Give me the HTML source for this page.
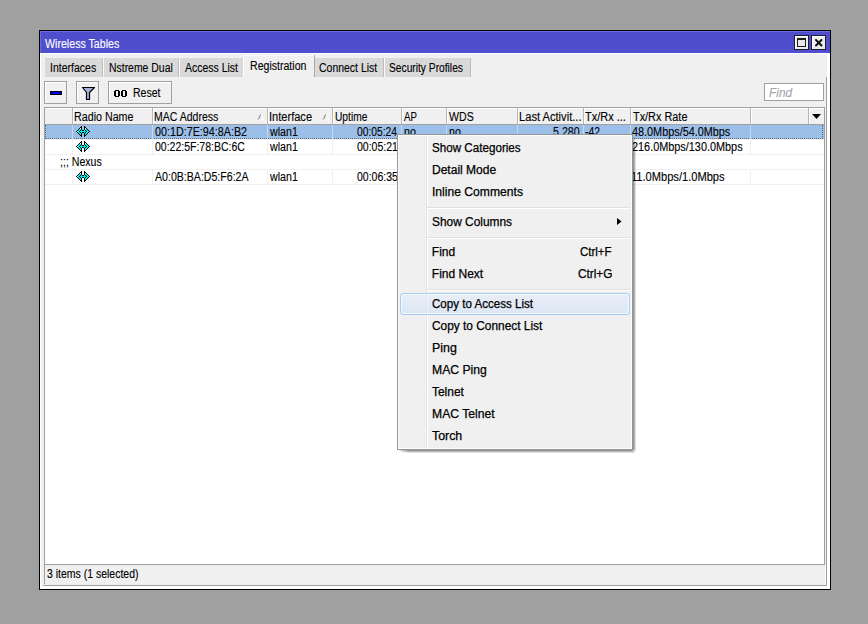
<!DOCTYPE html>
<html><head><meta charset="utf-8">
<style>
*{box-sizing:border-box;margin:0;padding:0}
html,body{width:868px;height:624px;overflow:hidden;background:#a0a0a0;font-family:"Liberation Sans",sans-serif;font-size:12px;color:#000}
.a{position:absolute}
.s{position:absolute;white-space:pre;font:12px/14px "Liberation Sans",sans-serif;transform-origin:0 0}
.hl{position:absolute;height:1px}
.s{-webkit-text-stroke:0.12px currentColor}
.s.m{-webkit-text-stroke:0.25px #000}
.vl{position:absolute;width:1px}
</style></head><body>
<!-- window frame -->
<div class="a" style="left:39px;top:30px;width:792px;height:560px;background:#000"></div>
<div class="a" style="left:40px;top:31px;width:790px;height:558px;background:#fff"></div>
<div class="a" style="left:41px;top:54px;width:786px;height:532px;background:#f0f0f0"></div>
<!-- title bar -->
<div class="a" style="left:40px;top:31px;width:790px;height:22px;background:#4f4fcd"></div>
<div class="hl" style="left:40px;top:31px;width:790px;background:#6b6be0"></div>
<div class="vl" style="left:40px;top:31px;height:22px;background:#6b6be0"></div>
<!-- title buttons -->
<div class="a" style="left:794px;top:35px;width:15px;height:15px;background:#1a1a30"></div>
<div class="a" style="left:795px;top:36px;width:13px;height:13px;background:#fff"></div>
<div class="a" style="left:796px;top:37px;width:12px;height:12px;background:#ececec"></div>
<div class="a" style="left:797px;top:38px;width:9px;height:9px;border:1px solid #202020;border-top-width:2px;background:#e8e8e8"></div>
<div class="a" style="left:811px;top:35px;width:15px;height:15px;background:#1a1a30"></div>
<div class="a" style="left:812px;top:36px;width:13px;height:13px;background:#fff"></div>
<div class="a" style="left:813px;top:37px;width:12px;height:12px;background:#ececec"></div>
<svg class="a" style="left:811px;top:35px" width="15" height="15" viewBox="0 0 15 15"><path d="M5 5L10.5 10.5M10.5 5L5 10.5" stroke="#111" stroke-width="2" stroke-linecap="round"/></svg>

<!-- tab strip -->
<div class="hl" style="left:40px;top:53px;width:790px;background:#fff"></div>
<div class="a" style="left:45px;top:58px;width:57px;height:19px;background:#d9d9d9"></div>
<div class="vl" style="left:102px;top:58px;height:19px;background:#bcbcbc"></div>
<div class="vl" style="left:103px;top:58px;height:19px;background:#fafafa"></div>
<div class="a" style="left:104px;top:58px;width:74px;height:19px;background:#d9d9d9"></div>
<div class="vl" style="left:178px;top:58px;height:19px;background:#bcbcbc"></div>
<div class="vl" style="left:179px;top:58px;height:19px;background:#fafafa"></div>
<div class="a" style="left:180px;top:58px;width:63px;height:19px;background:#d9d9d9"></div>
<div class="vl" style="left:243px;top:56px;height:22px;background:#fff"></div>
<div class="hl" style="left:243px;top:55px;width:71px;background:#fafafa"></div>
<div class="vl" style="left:314px;top:55px;height:22px;background:#a8a8a8"></div>
<div class="a" style="left:315px;top:58px;width:68px;height:19px;background:#d9d9d9"></div>
<div class="vl" style="left:383px;top:58px;height:19px;background:#bcbcbc"></div>
<div class="vl" style="left:384px;top:58px;height:19px;background:#fafafa"></div>
<div class="a" style="left:385px;top:58px;width:85px;height:19px;background:#d9d9d9"></div>
<div class="vl" style="left:470px;top:58px;height:19px;background:#bcbcbc"></div>

<!-- panel border right -->
<div class="vl" style="left:826px;top:77px;height:509px;background:#a0a0a0"></div>
<div class="hl" style="left:43px;top:585px;width:784px;background:#a0a0a0"></div>

<!-- toolbar buttons -->
<div class="a" style="left:44px;top:81px;width:23px;height:23px;border:1px solid #a0a0a0;background:#f0f0f0;box-shadow:inset 1px 1px 0 #fff"></div>
<div class="a" style="left:50px;top:91px;width:12px;height:4px;background:#000"></div>
<div class="a" style="left:51px;top:92px;width:10px;height:2px;background:#0000f0"></div>
<div class="a" style="left:76px;top:81px;width:23px;height:23px;border:1px solid #a0a0a0;background:#f0f0f0;box-shadow:inset 1px 1px 0 #fff"></div>
<svg class="a" style="left:76px;top:81px" width="23" height="23" viewBox="0 0 23 23"><path d="M6.5 6.5H18.5L13.5 11.5V18.5H10.5V11.5Z" fill="#a4b2dc" stroke="#000" stroke-width="1.2" stroke-linejoin="round"/></svg>
<div class="a" style="left:108px;top:81px;width:64px;height:23px;border:1px solid #a0a0a0;background:#f0f0f0;box-shadow:inset 1px 1px 0 #fff"></div>
<svg class="a" style="left:114px;top:90px" width="13" height="7" viewBox="0 0 13 7" shape-rendering="crispEdges"><path d="M1 0H5V1H6V6H5V7H1V6H0V1H1Z M2 1V6H4V1Z M8 0H12V1H13V6H12V7H8V6H7V1H8Z M9 1V6H11V1Z" fill="#000" fill-rule="evenodd"/></svg>
<div class="a" style="left:764px;top:83px;width:60px;height:18px;border:1px solid #a0a0a0;background:#fff"></div>

<!-- table -->
<div class="a" style="left:44px;top:107px;width:781px;height:458px;border:1px solid #a0a0a0;background:#fff"></div>
<div class="a" style="left:45px;top:108px;width:779px;height:16px;background:#f0f0f0;border-top:1px solid #fff"></div>
<div class="hl" style="left:45px;top:124px;width:779px;background:#a0a0a0"></div>
<div class="vl" style="left:72px;top:108px;height:16px;background:#b8b8b8"></div><div class="vl" style="left:73px;top:109px;height:15px;background:#fff"></div>
<div class="vl" style="left:152px;top:108px;height:16px;background:#b8b8b8"></div><div class="vl" style="left:153px;top:109px;height:15px;background:#fff"></div>
<div class="vl" style="left:267px;top:108px;height:16px;background:#b8b8b8"></div><div class="vl" style="left:268px;top:109px;height:15px;background:#fff"></div>
<div class="vl" style="left:332px;top:108px;height:16px;background:#b8b8b8"></div><div class="vl" style="left:333px;top:109px;height:15px;background:#fff"></div>
<div class="vl" style="left:401px;top:108px;height:16px;background:#b8b8b8"></div><div class="vl" style="left:402px;top:109px;height:15px;background:#fff"></div>
<div class="vl" style="left:446px;top:108px;height:16px;background:#b8b8b8"></div><div class="vl" style="left:447px;top:109px;height:15px;background:#fff"></div>
<div class="vl" style="left:517px;top:108px;height:16px;background:#b8b8b8"></div><div class="vl" style="left:518px;top:109px;height:15px;background:#fff"></div>
<div class="vl" style="left:583px;top:108px;height:16px;background:#b8b8b8"></div><div class="vl" style="left:584px;top:109px;height:15px;background:#fff"></div>
<div class="vl" style="left:630px;top:108px;height:16px;background:#b8b8b8"></div><div class="vl" style="left:631px;top:109px;height:15px;background:#fff"></div>
<div class="vl" style="left:750px;top:108px;height:16px;background:#b8b8b8"></div><div class="vl" style="left:751px;top:109px;height:15px;background:#fff"></div>
<div class="vl" style="left:808px;top:108px;height:16px;background:#b8b8b8"></div><div class="vl" style="left:809px;top:109px;height:15px;background:#fff"></div>

<!-- sort arrows -->
<svg class="a" style="left:256px;top:112px" width="10" height="10"><path d="M2 8L5 2" stroke="#989898" stroke-width="1.2"/><path d="M5 2L8 8H2" stroke="#fff" stroke-width="1" fill="none"/></svg>
<svg class="a" style="left:321px;top:112px" width="10" height="10"><path d="M2 8L5 2" stroke="#989898" stroke-width="1.2"/><path d="M5 2L8 8H2" stroke="#fff" stroke-width="1" fill="none"/></svg>
<!-- dropdown arrow -->
<svg class="a" style="left:812px;top:114px" width="10" height="6"><path d="M0 0H9L4.5 5Z" fill="#000"/></svg>

<!-- rows -->
<div class="a" style="left:45px;top:125px;width:779px;height:14px;background:#9cbfea"></div>
<div class="hl" style="left:45px;top:138px;width:778px;border-top:1px dotted #6a6a6a"></div>
<div class="vl" style="left:45px;top:125px;height:14px;border-left:1px dotted #6a6a6a"></div>
<div class="vl" style="left:822px;top:125px;height:14px;border-left:1px dotted #6a6a6a"></div>
<div class="hl" style="left:45px;top:139px;width:779px;background:#f0f0f0"></div>
<div class="hl" style="left:45px;top:154px;width:779px;background:#f0f0f0"></div>
<div class="hl" style="left:45px;top:169px;width:779px;background:#f0f0f0"></div>
<div class="hl" style="left:45px;top:184px;width:779px;background:#f0f0f0"></div>
<div class="vl" style="left:72px;top:125px;height:14px;background:#c4d8f2"></div>
<div class="vl" style="left:72px;top:139px;height:15px;background:#f0f0f0"></div>
<div class="vl" style="left:72px;top:169px;height:15px;background:#f0f0f0"></div>
<div class="vl" style="left:152px;top:125px;height:14px;background:#c4d8f2"></div>
<div class="vl" style="left:152px;top:139px;height:15px;background:#f0f0f0"></div>
<div class="vl" style="left:152px;top:169px;height:15px;background:#f0f0f0"></div>
<div class="vl" style="left:267px;top:125px;height:14px;background:#c4d8f2"></div>
<div class="vl" style="left:267px;top:139px;height:15px;background:#f0f0f0"></div>
<div class="vl" style="left:267px;top:169px;height:15px;background:#f0f0f0"></div>
<div class="vl" style="left:332px;top:125px;height:14px;background:#c4d8f2"></div>
<div class="vl" style="left:332px;top:139px;height:15px;background:#f0f0f0"></div>
<div class="vl" style="left:332px;top:169px;height:15px;background:#f0f0f0"></div>
<div class="vl" style="left:401px;top:125px;height:14px;background:#c4d8f2"></div>
<div class="vl" style="left:401px;top:139px;height:15px;background:#f0f0f0"></div>
<div class="vl" style="left:401px;top:169px;height:15px;background:#f0f0f0"></div>
<div class="vl" style="left:446px;top:125px;height:14px;background:#c4d8f2"></div>
<div class="vl" style="left:446px;top:139px;height:15px;background:#f0f0f0"></div>
<div class="vl" style="left:446px;top:169px;height:15px;background:#f0f0f0"></div>
<div class="vl" style="left:517px;top:125px;height:14px;background:#c4d8f2"></div>
<div class="vl" style="left:517px;top:139px;height:15px;background:#f0f0f0"></div>
<div class="vl" style="left:517px;top:169px;height:15px;background:#f0f0f0"></div>
<div class="vl" style="left:583px;top:125px;height:14px;background:#c4d8f2"></div>
<div class="vl" style="left:583px;top:139px;height:15px;background:#f0f0f0"></div>
<div class="vl" style="left:583px;top:169px;height:15px;background:#f0f0f0"></div>
<div class="vl" style="left:630px;top:125px;height:14px;background:#c4d8f2"></div>
<div class="vl" style="left:630px;top:139px;height:15px;background:#f0f0f0"></div>
<div class="vl" style="left:630px;top:169px;height:15px;background:#f0f0f0"></div>
<div class="vl" style="left:750px;top:125px;height:14px;background:#c4d8f2"></div>
<div class="vl" style="left:750px;top:139px;height:15px;background:#f0f0f0"></div>
<div class="vl" style="left:750px;top:169px;height:15px;background:#f0f0f0"></div>

<svg class="a" style="left:76px;top:126px" width="14" height="11" viewBox="0 0 14 11" shape-rendering="crispEdges"><path d="M5 0h1v1h-1zM8 0h1v1h-1zM4 1h1v1h-1zM5 1h1v1h-1zM8 1h1v1h-1zM9 1h1v1h-1zM3 2h1v1h-1zM5 2h1v1h-1zM8 2h1v1h-1zM10 2h1v1h-1zM2 3h1v1h-1zM5 3h1v1h-1zM8 3h1v1h-1zM11 3h1v1h-1zM1 4h1v1h-1zM4 4h1v1h-1zM6 4h1v1h-1zM7 4h1v1h-1zM9 4h1v1h-1zM12 4h1v1h-1zM0 5h1v1h-1zM3 5h1v1h-1zM10 5h1v1h-1zM13 5h1v1h-1zM1 6h1v1h-1zM4 6h1v1h-1zM6 6h1v1h-1zM7 6h1v1h-1zM9 6h1v1h-1zM12 6h1v1h-1zM2 7h1v1h-1zM5 7h1v1h-1zM8 7h1v1h-1zM11 7h1v1h-1zM3 8h1v1h-1zM5 8h1v1h-1zM8 8h1v1h-1zM10 8h1v1h-1zM4 9h1v1h-1zM5 9h1v1h-1zM8 9h1v1h-1zM9 9h1v1h-1zM5 10h1v1h-1zM8 10h1v1h-1z" fill="#000"/><path d="M4 2h1v1h-1zM9 2h1v1h-1zM1 5h1v1h-1z" fill="#d8ffff"/><path d="M3 3h1v1h-1zM4 3h1v1h-1zM9 3h1v1h-1zM10 3h1v1h-1zM2 4h1v1h-1zM3 4h1v1h-1zM5 4h1v1h-1zM8 4h1v1h-1zM10 4h1v1h-1zM11 4h1v1h-1zM2 5h1v1h-1zM4 5h1v1h-1zM5 5h1v1h-1zM6 5h1v1h-1zM7 5h1v1h-1zM8 5h1v1h-1zM9 5h1v1h-1zM11 5h1v1h-1zM12 5h1v1h-1zM2 6h1v1h-1zM3 6h1v1h-1zM5 6h1v1h-1zM8 6h1v1h-1zM10 6h1v1h-1zM11 6h1v1h-1zM3 7h1v1h-1zM4 7h1v1h-1zM9 7h1v1h-1zM10 7h1v1h-1zM4 8h1v1h-1zM9 8h1v1h-1z" fill="#00f0f0"/></svg>
<svg class="a" style="left:76px;top:141px" width="14" height="11" viewBox="0 0 14 11" shape-rendering="crispEdges"><path d="M5 0h1v1h-1zM8 0h1v1h-1zM4 1h1v1h-1zM5 1h1v1h-1zM8 1h1v1h-1zM9 1h1v1h-1zM3 2h1v1h-1zM5 2h1v1h-1zM8 2h1v1h-1zM10 2h1v1h-1zM2 3h1v1h-1zM5 3h1v1h-1zM8 3h1v1h-1zM11 3h1v1h-1zM1 4h1v1h-1zM4 4h1v1h-1zM6 4h1v1h-1zM7 4h1v1h-1zM9 4h1v1h-1zM12 4h1v1h-1zM0 5h1v1h-1zM3 5h1v1h-1zM10 5h1v1h-1zM13 5h1v1h-1zM1 6h1v1h-1zM4 6h1v1h-1zM6 6h1v1h-1zM7 6h1v1h-1zM9 6h1v1h-1zM12 6h1v1h-1zM2 7h1v1h-1zM5 7h1v1h-1zM8 7h1v1h-1zM11 7h1v1h-1zM3 8h1v1h-1zM5 8h1v1h-1zM8 8h1v1h-1zM10 8h1v1h-1zM4 9h1v1h-1zM5 9h1v1h-1zM8 9h1v1h-1zM9 9h1v1h-1zM5 10h1v1h-1zM8 10h1v1h-1z" fill="#000"/><path d="M4 2h1v1h-1zM9 2h1v1h-1zM1 5h1v1h-1z" fill="#d8ffff"/><path d="M3 3h1v1h-1zM4 3h1v1h-1zM9 3h1v1h-1zM10 3h1v1h-1zM2 4h1v1h-1zM3 4h1v1h-1zM5 4h1v1h-1zM8 4h1v1h-1zM10 4h1v1h-1zM11 4h1v1h-1zM2 5h1v1h-1zM4 5h1v1h-1zM5 5h1v1h-1zM6 5h1v1h-1zM7 5h1v1h-1zM8 5h1v1h-1zM9 5h1v1h-1zM11 5h1v1h-1zM12 5h1v1h-1zM2 6h1v1h-1zM3 6h1v1h-1zM5 6h1v1h-1zM8 6h1v1h-1zM10 6h1v1h-1zM11 6h1v1h-1zM3 7h1v1h-1zM4 7h1v1h-1zM9 7h1v1h-1zM10 7h1v1h-1zM4 8h1v1h-1zM9 8h1v1h-1z" fill="#00f0f0"/></svg>
<svg class="a" style="left:76px;top:171px" width="14" height="11" viewBox="0 0 14 11" shape-rendering="crispEdges"><path d="M5 0h1v1h-1zM8 0h1v1h-1zM4 1h1v1h-1zM5 1h1v1h-1zM8 1h1v1h-1zM9 1h1v1h-1zM3 2h1v1h-1zM5 2h1v1h-1zM8 2h1v1h-1zM10 2h1v1h-1zM2 3h1v1h-1zM5 3h1v1h-1zM8 3h1v1h-1zM11 3h1v1h-1zM1 4h1v1h-1zM4 4h1v1h-1zM6 4h1v1h-1zM7 4h1v1h-1zM9 4h1v1h-1zM12 4h1v1h-1zM0 5h1v1h-1zM3 5h1v1h-1zM10 5h1v1h-1zM13 5h1v1h-1zM1 6h1v1h-1zM4 6h1v1h-1zM6 6h1v1h-1zM7 6h1v1h-1zM9 6h1v1h-1zM12 6h1v1h-1zM2 7h1v1h-1zM5 7h1v1h-1zM8 7h1v1h-1zM11 7h1v1h-1zM3 8h1v1h-1zM5 8h1v1h-1zM8 8h1v1h-1zM10 8h1v1h-1zM4 9h1v1h-1zM5 9h1v1h-1zM8 9h1v1h-1zM9 9h1v1h-1zM5 10h1v1h-1zM8 10h1v1h-1z" fill="#000"/><path d="M4 2h1v1h-1zM9 2h1v1h-1zM1 5h1v1h-1z" fill="#d8ffff"/><path d="M3 3h1v1h-1zM4 3h1v1h-1zM9 3h1v1h-1zM10 3h1v1h-1zM2 4h1v1h-1zM3 4h1v1h-1zM5 4h1v1h-1zM8 4h1v1h-1zM10 4h1v1h-1zM11 4h1v1h-1zM2 5h1v1h-1zM4 5h1v1h-1zM5 5h1v1h-1zM6 5h1v1h-1zM7 5h1v1h-1zM8 5h1v1h-1zM9 5h1v1h-1zM11 5h1v1h-1zM12 5h1v1h-1zM2 6h1v1h-1zM3 6h1v1h-1zM5 6h1v1h-1zM8 6h1v1h-1zM10 6h1v1h-1zM11 6h1v1h-1zM3 7h1v1h-1zM4 7h1v1h-1zM9 7h1v1h-1zM10 7h1v1h-1zM4 8h1v1h-1zM9 8h1v1h-1z" fill="#00f0f0"/></svg>

<!-- status bar -->
<div class="hl" style="left:45px;top:564px;width:780px;background:#a0a0a0"></div>
<div class="vl" style="left:44px;top:564px;height:20px;background:#a0a0a0"></div>
<div class="vl" style="left:825px;top:565px;height:20px;background:#fff"></div>

<span class="s" style="left:45.00px;top:37px;transform:scaleX(0.886);color:#fff;">Wireless Tables</span>
<span class="s" style="left:49.72px;top:61px;transform:scaleX(0.877);color:#000;">Interfaces</span>
<span class="s" style="left:108.53px;top:61px;transform:scaleX(0.869);color:#000;">Nstreme Dual</span>
<span class="s" style="left:185.00px;top:61px;transform:scaleX(0.872);color:#000;">Access List</span>
<span class="s" style="left:250.12px;top:59px;transform:scaleX(0.881);color:#000;">Registration</span>
<span class="s" style="left:318.80px;top:61px;transform:scaleX(0.872);color:#000;">Connect List</span>
<span class="s" style="left:389.45px;top:61px;transform:scaleX(0.853);color:#000;">Security Profiles</span>
<span class="s" style="left:132.72px;top:86px;transform:scaleX(0.877);color:#000;">Reset</span>
<span class="s" style="left:769.30px;top:86px;transform:scaleX(0.988);color:#a4a4ac;font-style:italic;">Find</span>
<span class="s" style="left:74.41px;top:110px;transform:scaleX(0.892);color:#000;">Radio Name</span>
<span class="s" style="left:154.42px;top:110px;transform:scaleX(0.876);color:#000;">MAC Address</span>
<span class="s" style="left:269.08px;top:110px;transform:scaleX(0.922);color:#000;">Interface</span>
<span class="s" style="left:334.55px;top:110px;transform:scaleX(0.851);color:#000;">Uptime</span>
<span class="s" style="left:404.20px;top:110px;transform:scaleX(0.806);color:#000;">AP</span>
<span class="s" style="left:449.30px;top:110px;transform:scaleX(0.882);color:#000;">WDS</span>
<span class="s" style="left:519.27px;top:110px;transform:scaleX(0.928);color:#000;">Last Activit...</span>
<span class="s" style="left:585.20px;top:110px;transform:scaleX(0.916);color:#000;">Tx/Rx ...</span>
<span class="s" style="left:633.10px;top:110px;transform:scaleX(0.907);color:#000;">Tx/Rx Rate</span>
<span class="s" style="left:155.30px;top:125px;transform:scaleX(0.896);color:#000;">00:1D:7E:94:8A:B2</span>
<span class="s" style="left:269.80px;top:125px;transform:scaleX(0.890);color:#000;">wlan1</span>
<span class="s" style="left:357.30px;top:125px;transform:scaleX(0.857);color:#000;">00:05:24</span>
<span class="s" style="left:403.61px;top:125px;transform:scaleX(0.890);color:#000;">no</span>
<span class="s" style="left:448.51px;top:125px;transform:scaleX(0.890);color:#000;">no</span>
<span class="s" style="left:552.91px;top:125px;transform:scaleX(0.890);color:#000;">5.280</span>
<span class="s" style="left:585.20px;top:125px;transform:scaleX(0.865);color:#000;">-42</span>
<span class="s" style="left:631.50px;top:125px;transform:scaleX(0.904);color:#000;">48.0Mbps/54.0Mbps</span>
<span class="s" style="left:155.30px;top:140px;transform:scaleX(0.875);color:#000;">00:22:5F:78:BC:6C</span>
<span class="s" style="left:269.80px;top:140px;transform:scaleX(0.890);color:#000;">wlan1</span>
<span class="s" style="left:357.30px;top:140px;transform:scaleX(0.876);color:#000;">00:05:21</span>
<span class="s" style="left:631.50px;top:140px;transform:scaleX(0.906);color:#000;">216.0Mbps/130.0Mbps</span>
<span class="s" style="left:60.32px;top:155px;transform:scaleX(0.883);color:#000;">;;; Nexus</span>
<span class="s" style="left:155.30px;top:170px;transform:scaleX(0.882);color:#000;">A0:0B:BA:D5:F6:2A</span>
<span class="s" style="left:269.80px;top:170px;transform:scaleX(0.890);color:#000;">wlan1</span>
<span class="s" style="left:357.30px;top:170px;transform:scaleX(0.876);color:#000;">00:06:35</span>
<span class="s" style="left:630.58px;top:170px;transform:scaleX(0.925);color:#000;">11.0Mbps/1.0Mbps</span>
<span class="s" style="left:46.93px;top:567px;transform:scaleX(0.874);color:#000;">3 items (1 selected)</span>

<!-- context menu -->
<div class="vl" style="left:633px;top:137px;height:313px;background:linear-gradient(rgba(0,0,0,0.15),rgba(0,0,0,0.42) 8px)"></div>
<div class="vl" style="left:634px;top:138px;height:313px;background:linear-gradient(rgba(0,0,0,0.08),rgba(0,0,0,0.28) 8px)"></div>
<div class="vl" style="left:635px;top:139px;height:312px;background:linear-gradient(rgba(0,0,0,0.03),rgba(0,0,0,0.12) 8px)"></div>
<div class="hl" style="left:400px;top:450px;width:233px;background:linear-gradient(90deg,rgba(0,0,0,0.15),rgba(0,0,0,0.42) 8px)"></div>
<div class="hl" style="left:401px;top:451px;width:233px;background:linear-gradient(90deg,rgba(0,0,0,0.08),rgba(0,0,0,0.28) 8px)"></div>
<div class="hl" style="left:402px;top:452px;width:233px;background:linear-gradient(90deg,rgba(0,0,0,0.03),rgba(0,0,0,0.12) 8px)"></div>
<div class="a" style="left:397px;top:134px;width:236px;height:316px;border:1px solid #979797;background:#f0f0f0"></div>
<div class="vl" style="left:398px;top:135px;height:314px;background:#fcfcfc"></div>
<div class="vl" style="left:631px;top:135px;height:314px;background:#fcfcfc"></div>
<div class="hl" style="left:398px;top:448px;width:234px;background:#fcfcfc"></div>
<div class="hl" style="left:398px;top:135px;width:234px;background:#fcfcfc"></div>
<div class="vl" style="left:426px;top:136px;height:312px;background:#e2e3e3"></div>
<div class="vl" style="left:427px;top:136px;height:312px;background:#fff"></div>
<div class="hl" style="left:427px;top:207px;width:203px;background:#e0e0e0"></div>
<div class="hl" style="left:427px;top:208px;width:203px;background:#fff"></div>
<div class="hl" style="left:427px;top:237px;width:203px;background:#e0e0e0"></div>
<div class="hl" style="left:427px;top:238px;width:203px;background:#fff"></div>
<div class="hl" style="left:427px;top:289px;width:203px;background:#e0e0e0"></div>
<div class="hl" style="left:427px;top:290px;width:203px;background:#fff"></div>
<div class="a" style="left:400px;top:293px;width:230px;height:22px;border:1px solid #a9cdf2;border-radius:3px;background:linear-gradient(rgba(225,236,252,0.55),rgba(205,222,248,0.55));box-shadow:inset 0 0 0 1px rgba(255,255,255,0.7)"></div>
<svg class="a" style="left:617px;top:218px" width="5" height="8"><path d="M0 0L4.5 3.5L0 7Z" fill="#000"/></svg>
<span class="s m" style="left:431.80px;top:141px;transform:scaleX(0.970)">Show Categories</span>
<span class="s m" style="left:431.80px;top:163px;transform:scaleX(1.002)">Detail Mode</span>
<span class="s m" style="left:431.80px;top:185px;transform:scaleX(1.010)">Inline Comments</span>
<span class="s m" style="left:431.80px;top:215px;transform:scaleX(0.991)">Show Columns</span>
<span class="s m" style="left:431.80px;top:245px;transform:scaleX(1.000)">Find</span>
<span class="s m" style="left:431.80px;top:267px;transform:scaleX(1.000)">Find Next</span>
<span class="s m" style="left:432.00px;top:297px;transform:scaleX(0.964)">Copy to Access List</span>
<span class="s m" style="left:432.00px;top:319px;transform:scaleX(0.990)">Copy to Connect List</span>
<span class="s m" style="left:431.80px;top:341px;transform:scaleX(1.036)">Ping</span>
<span class="s m" style="left:431.80px;top:363px;transform:scaleX(1.015)">MAC Ping</span>
<span class="s m" style="left:432.00px;top:385px;transform:scaleX(0.994)">Telnet</span>
<span class="s m" style="left:431.80px;top:407px;transform:scaleX(1.013)">MAC Telnet</span>
<span class="s m" style="left:432.00px;top:429px;transform:scaleX(1.031)">Torch</span>
<span class="s m" style="left:579.60px;top:245px;transform:scaleX(0.955)">Ctrl+F</span>
<span class="s m" style="left:577.70px;top:267px;transform:scaleX(0.982)">Ctrl+G</span>
</body></html>
